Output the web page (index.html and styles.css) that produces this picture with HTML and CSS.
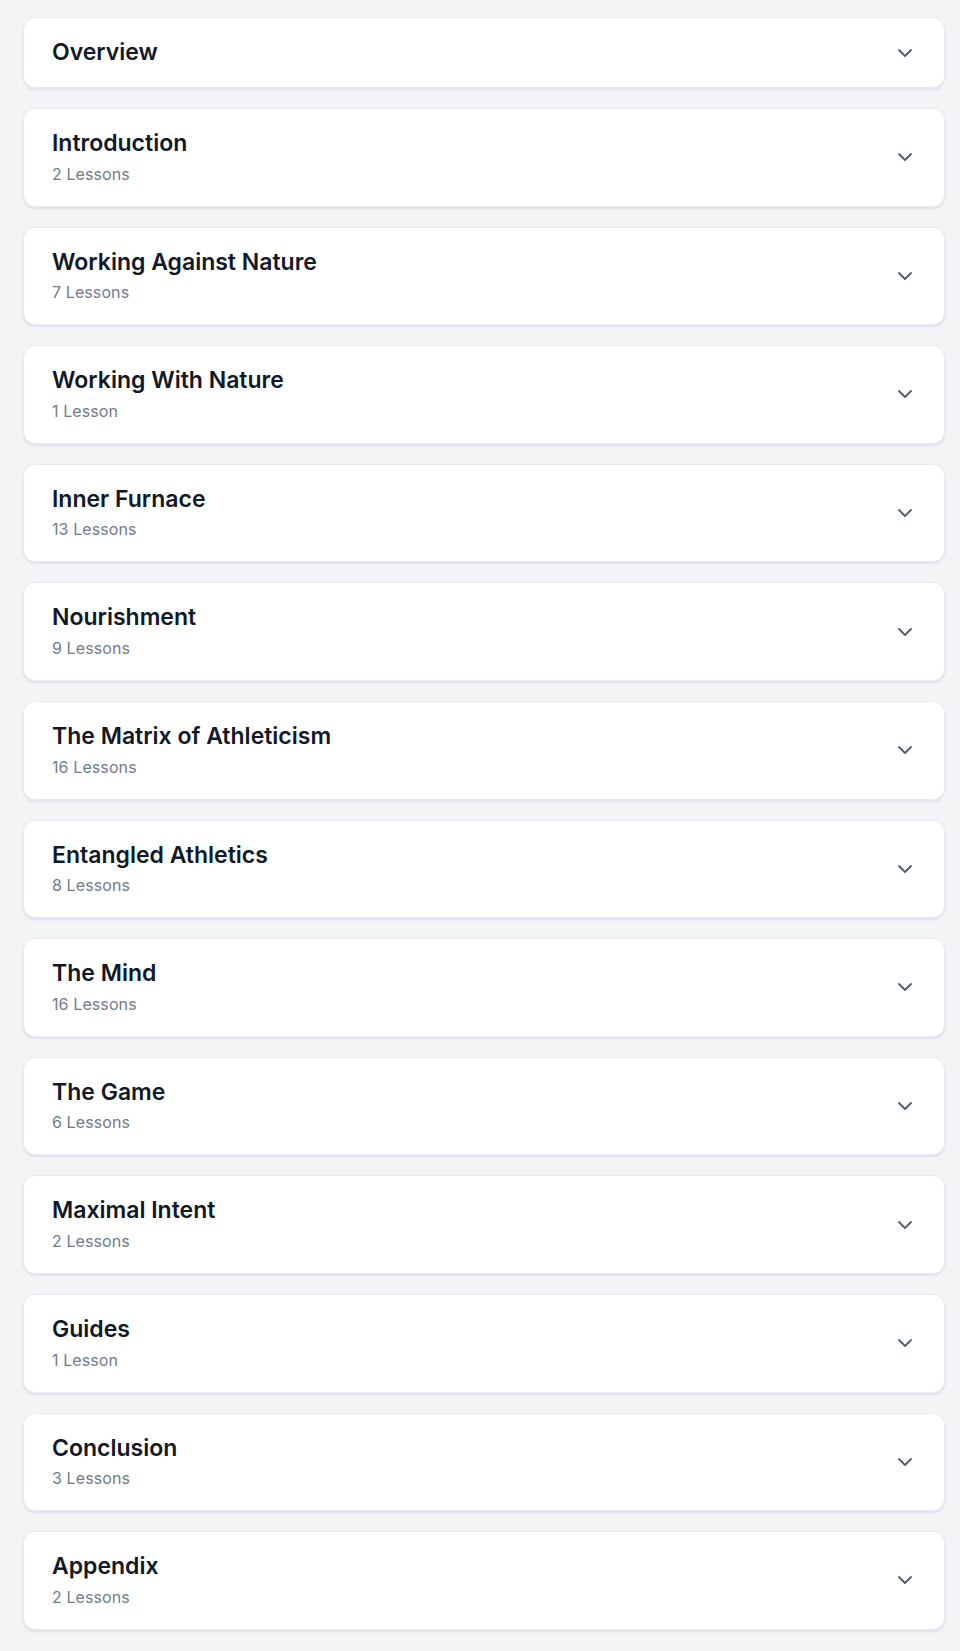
FILE: index.html
```html
<!DOCTYPE html>
<html lang="en">
<head>
  <meta charset="UTF-8" />
  <meta name="viewport" content="width=device-width, initial-scale=1.0" />
  <title>Course Modules</title>
  <link rel="stylesheet" href="styles.css">
</head>
<body>
  <div class="modul-liste">
    <div class="modul">
      <div class="modul-text">
        <div class="modul-titel">Overview</div>
      </div>
      <svg class="pfeil" viewBox="0 0 24 24"><path d="m6 9 6 6 6-6"/></svg>
    </div>
    <div class="modul">
      <div class="modul-text">
        <div class="modul-titel">Introduction</div>
        <div class="modul-anzahl">2 Lessons</div>
      </div>
      <svg class="pfeil" viewBox="0 0 24 24"><path d="m6 9 6 6 6-6"/></svg>
    </div>
    <div class="modul">
      <div class="modul-text">
        <div class="modul-titel">Working Against Nature</div>
        <div class="modul-anzahl">7 Lessons</div>
      </div>
      <svg class="pfeil" viewBox="0 0 24 24"><path d="m6 9 6 6 6-6"/></svg>
    </div>
    <div class="modul">
      <div class="modul-text">
        <div class="modul-titel">Working With Nature</div>
        <div class="modul-anzahl">1 Lesson</div>
      </div>
      <svg class="pfeil" viewBox="0 0 24 24"><path d="m6 9 6 6 6-6"/></svg>
    </div>
    <div class="modul">
      <div class="modul-text">
        <div class="modul-titel">Inner Furnace</div>
        <div class="modul-anzahl">13 Lessons</div>
      </div>
      <svg class="pfeil" viewBox="0 0 24 24"><path d="m6 9 6 6 6-6"/></svg>
    </div>
    <div class="modul">
      <div class="modul-text">
        <div class="modul-titel">Nourishment</div>
        <div class="modul-anzahl">9 Lessons</div>
      </div>
      <svg class="pfeil" viewBox="0 0 24 24"><path d="m6 9 6 6 6-6"/></svg>
    </div>
    <div class="modul">
      <div class="modul-text">
        <div class="modul-titel">The Matrix of Athleticism</div>
        <div class="modul-anzahl">16 Lessons</div>
      </div>
      <svg class="pfeil" viewBox="0 0 24 24"><path d="m6 9 6 6 6-6"/></svg>
    </div>
    <div class="modul">
      <div class="modul-text">
        <div class="modul-titel">Entangled Athletics</div>
        <div class="modul-anzahl">8 Lessons</div>
      </div>
      <svg class="pfeil" viewBox="0 0 24 24"><path d="m6 9 6 6 6-6"/></svg>
    </div>
    <div class="modul">
      <div class="modul-text">
        <div class="modul-titel">The Mind</div>
        <div class="modul-anzahl">16 Lessons</div>
      </div>
      <svg class="pfeil" viewBox="0 0 24 24"><path d="m6 9 6 6 6-6"/></svg>
    </div>
    <div class="modul">
      <div class="modul-text">
        <div class="modul-titel">The Game</div>
        <div class="modul-anzahl">6 Lessons</div>
      </div>
      <svg class="pfeil" viewBox="0 0 24 24"><path d="m6 9 6 6 6-6"/></svg>
    </div>
    <div class="modul">
      <div class="modul-text">
        <div class="modul-titel">Maximal Intent</div>
        <div class="modul-anzahl">2 Lessons</div>
      </div>
      <svg class="pfeil" viewBox="0 0 24 24"><path d="m6 9 6 6 6-6"/></svg>
    </div>
    <div class="modul">
      <div class="modul-text">
        <div class="modul-titel">Guides</div>
        <div class="modul-anzahl">1 Lesson</div>
      </div>
      <svg class="pfeil" viewBox="0 0 24 24"><path d="m6 9 6 6 6-6"/></svg>
    </div>
    <div class="modul">
      <div class="modul-text">
        <div class="modul-titel">Conclusion</div>
        <div class="modul-anzahl">3 Lessons</div>
      </div>
      <svg class="pfeil" viewBox="0 0 24 24"><path d="m6 9 6 6 6-6"/></svg>
    </div>
    <div class="modul">
      <div class="modul-text">
        <div class="modul-titel">Appendix</div>
        <div class="modul-anzahl">2 Lessons</div>
      </div>
      <svg class="pfeil" viewBox="0 0 24 24"><path d="m6 9 6 6 6-6"/></svg>
    </div>
  </div>
</body>
</html>
```

FILE: styles.css
```css
body {
  font-family: Inter, 'Noto Sans', sans-serif;
  background: #f3f4f6;
  margin: 0;
  padding: 17px 15px 21px 23px;
}
.modul-liste {
  display: flex;
  flex-direction: column;
  gap: 20px;
}
.modul {
  display: flex;
  align-items: center;
  justify-content: space-between;
  background: white;
  border: 1px solid #ebe8f4;
  border-radius: 12px;
  padding: 20px 27px 20px 28px;
  box-shadow: 0 2px 2px rgba(70, 55, 130, 0.1);
}
.modul-titel {
  font-size: 23px;
  line-height: 29px;
  font-weight: 600;
  color: #111827;
}
.modul-anzahl {
  margin-top: 4.6px;
  font-size: 16px;
  line-height: 23px;
  letter-spacing: 0.1px;
  color: #737a8c;
}
.pfeil {
  width: 24px;
  height: 24px;
  fill: none;
  stroke: #525a6b;
  stroke-width: 1.8;
  stroke-linecap: round;
  stroke-linejoin: round;
}
```
